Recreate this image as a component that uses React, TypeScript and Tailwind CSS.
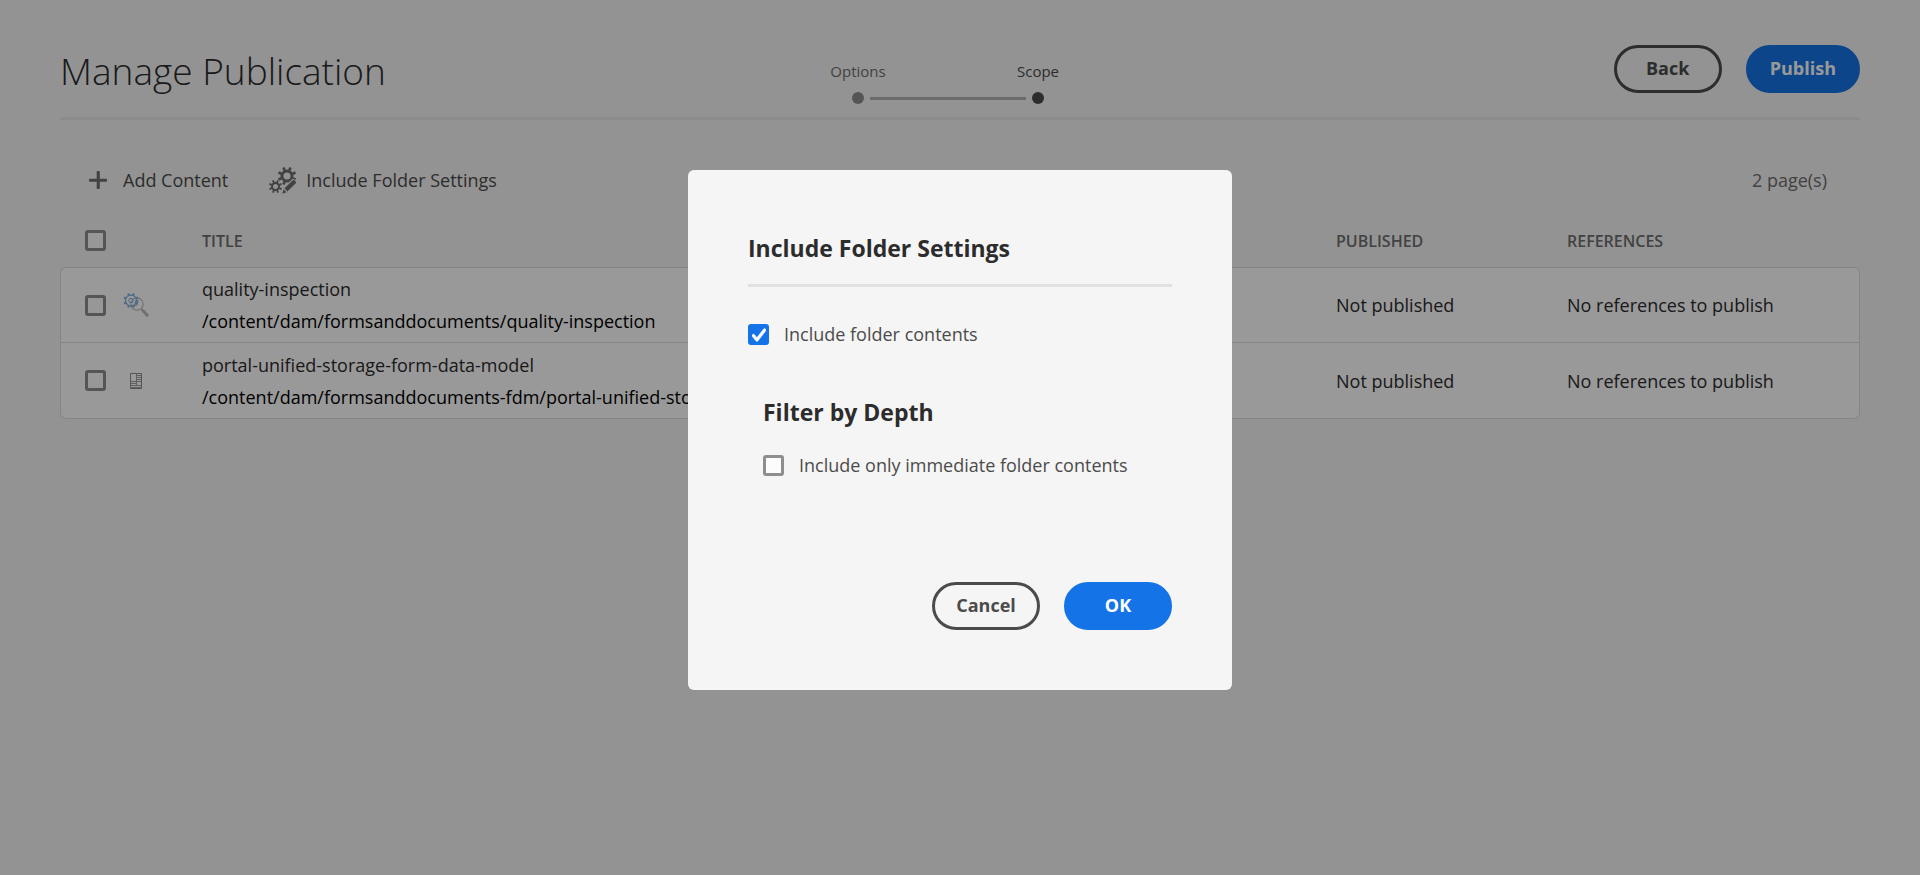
import type { ReactNode } from "react";

function Checkbox({ id, label, checked = false }: { id: string; label?: string; checked?: boolean }) {
  return (
    <span className="relative block size-[21px] shrink-0">
      <input
        id={id}
        type="checkbox"
        aria-label={label}
        defaultChecked={checked}
        className="peer block size-[21px] appearance-none rounded-[3px] border-3 border-[#8e8e8e] bg-[#fcfcfc] checked:border-[#1473e6] checked:bg-[#1473e6]"
      />
      <svg
        viewBox="0 0 10 10"
        aria-hidden="true"
        className="pointer-events-none absolute inset-0 m-auto hidden size-[14px] fill-white stroke-white peer-checked:block"
      >
        <path
          strokeWidth="0.4"
          d="M3.5 9.5a1 1 0 0 1-.774-.368l-2.45-3a1 1 0 1 1 1.548-1.264l1.657 2.028 4.68-6.01A1 1 0 0 1 9.74 2.114l-5.45 7a1 1 0 0 1-.777.386z"
        />
      </svg>
    </span>
  );
}

function Button({ children, primary = false }: { children: ReactNode; primary?: boolean }) {
  const tone = primary
    ? "border-[#1473e6] bg-[#1473e6] text-white"
    : "border-[#4b4b4b] bg-transparent text-[#4b4b4b]";
  return (
    <button
      type="button"
      className={`h-12 min-w-[108px] rounded-full border-3 px-[21px] pb-[2px] text-lg leading-6 font-bold ${tone}`}
    >
      {children}
    </button>
  );
}

function Teeth({ cx, cy, r, width, length }: { cx: number; cy: number; r: number; width: number; length: number }) {
  return (
    <g strokeWidth={width}>
      {[0, 45, 90, 135, 180, 225, 270, 315].map((a) => (
        <path key={a} d={`M${cx} ${cy - r}v${-length}`} transform={`rotate(${a + 22.5} ${cx} ${cy})`} />
      ))}
    </g>
  );
}

function PlusIcon() {
  return (
    <svg viewBox="0 0 20 20" aria-hidden="true" className="size-5 fill-[#6e6e6e]">
      <path d="M9.4 1h1.7a.7.7 0 0 1 .7.7v7h6.5a.7.7 0 0 1 .7.7v1.7a.7.7 0 0 1-.7.7h-6.5v6.5a.7.7 0 0 1-.7.7H9.4a.7.7 0 0 1-.7-.7v-6.5h-7a.7.7 0 0 1-.7-.7V9.4a.7.7 0 0 1 .7-.7h7v-7a.7.7 0 0 1 .7-.7z" />
    </svg>
  );
}

function GearsEditIcon() {
  return (
    <svg viewBox="0 0 28 28" aria-hidden="true" className="size-7 fill-none stroke-[#6e6e6e]">
      <circle cx="19" cy="10" r="5" strokeWidth="2.9" />
      <Teeth cx={19} cy={10} r={6} width={2.6} length={3.2} />
      <circle cx="7.5" cy="20.5" r="3.5" strokeWidth="2" />
      <Teeth cx={7.5} cy={20.5} r={4} width={1.9} length={2.6} />
      <path d="M13.5 28l1.2-6L25 12.5l4.5 3.5z" className="fill-[#f5f5f5]" stroke="none" />
      <path
        d="M14.3 27.7l1.3-4.4 2.9 3zM16.500 22.300l8.500-8.200a.7.7 0 0 1 1 0l2 2a.7.7 0 0 1 0 1l-8.600 8.300z"
        className="fill-[#6e6e6e]"
        stroke="none"
      />
    </svg>
  );
}

function InspectionIcon() {
  return (
    <svg viewBox="0 0 26 26" aria-hidden="true" className="size-[26px] fill-none">
      <circle cx="14" cy="12" r="6.2" stroke="#c0c0c0" strokeWidth="1.2" />
      <path d="M18.5 17l1.3 1.4" stroke="#b4b4b4" strokeWidth="1.6" />
      <path d="M19.8 18.5l4.4 4.6" stroke="#bcbcbc" strokeWidth="3" strokeLinecap="round" />
      <g stroke="#7aaede">
        <circle cx="8" cy="8.5" r="5.4" strokeWidth="1.1" />
        <Teeth cx={8} cy={8.5} r={5.6} width={2.2} length={1.9} />
        <circle cx="8" cy="8.5" r="2.2" strokeWidth="1" />
        <path d="M12 11.5l1.5-3 2.5.5M11.5 13.5l3-1" strokeWidth="1.2" />
      </g>
    </svg>
  );
}

function DataModelIcon() {
  return (
    <svg viewBox="0 0 26 26" aria-hidden="true" className="size-[26px] fill-none stroke-[#a0a0a0]">
      <path d="M7.5 5.5h11v15h-11z" className="stroke-[#8e8e8e]" />
      <path d="M13.5 5.5v12M7.5 13.5h11M14 7.5h4M14 9.5h4M14 11.5h4M7.5 15.5h6M7.5 17.5h11M7.5 19.5h11" />
    </svg>
  );
}

const rows = [
  {
    id: "quality-inspection",
    icon: <InspectionIcon />,
    path: "/content/dam/formsanddocuments/quality-inspection",
  },
  {
    id: "portal-unified-storage-form-data-model",
    icon: <DataModelIcon />,
    path: "/content/dam/formsanddocuments-fdm/portal-unified-storage-form-data-model",
  },
];

const cell = "h-[76px] border-b border-[#dedede] bg-white p-0 group-first:border-t";
const firstCell = "border-l pl-6 group-first:rounded-tl-md group-last:rounded-bl-md";
const lastCell = "border-r group-first:rounded-tr-md group-last:rounded-br-md";

export default function App() {
  return (
    <div className="min-h-screen bg-[#f5f5f5] px-[60px] font-['Open_Sans','Noto_Sans',sans-serif] text-lg leading-6 text-[#2c2c2c]">
      <header className="flex items-start border-b-3 border-[#eaeaea] pt-[45px] pb-[13px]">
        <h1 className="flex-1 text-[37px] leading-[52px] font-light">Manage Publication</h1>
        <div className="flex flex-col items-center pt-4 pr-6">
          <ol className="flex text-center text-[15px] leading-5">
            <li className="w-[180px] text-[#6e6e6e]">Options</li>
            <li className="w-[180px] text-[#4b4b4b]" aria-current="step">Scope</li>
          </ol>
          <div className="mt-[11px] flex items-center gap-[6px]" aria-hidden="true">
            <span className="size-3 rounded-full bg-[#8e8e8e]" />
            <span className="h-[3px] w-[156px] bg-[#b3b3b3]" />
            <span className="size-3 rounded-full bg-[#4b4b4b]" />
          </div>
        </div>
        <div className="flex flex-1 justify-end gap-6">
          <Button>Back</Button>
          <Button primary>Publish</Button>
        </div>
      </header>

      <main>
        <div className="mt-[26px] flex h-[68px] items-center pr-[33px] pl-7 text-[#4b4b4b]">
          <button type="button" className="flex items-center gap-[15px]">
            <PlusIcon />
            Add Content
          </button>
          <button type="button" className="ml-10 flex items-center gap-[10px]">
            <GearsEditIcon />
            Include Folder Settings
          </button>
          <span className="ml-auto text-[#6e6e6e]">2 page(s)</span>
        </div>

        <table className="w-full table-fixed border-separate border-spacing-0 text-left">
          <colgroup>
            <col className="w-[63px]" />
            <col className="w-[79px]" />
            <col />
            <col className="w-[231px]" />
            <col className="w-[293px]" />
          </colgroup>
          <thead className="text-base text-[#6e6e6e]">
            <tr>
              <th className="h-[53px] p-0 pl-[25px]">
                <Checkbox id="select-all" label="Select all" />
              </th>
              <td />
              <th className="p-0 font-semibold">TITLE</th>
              <th className="p-0 font-semibold">PUBLISHED</th>
              <th className="p-0 font-semibold">REFERENCES</th>
            </tr>
          </thead>
          <tbody>
            {rows.map((row) => (
              <tr key={row.id} className="group">
                <td className={`${cell} ${firstCell}`}>
                  <Checkbox id={row.id} label={row.id} />
                </td>
                <td className={cell}>{row.icon}</td>
                <td className={`${cell} leading-8 whitespace-nowrap`}>
                  <div>{row.id}</div>
                  <div className="text-black">{row.path}</div>
                </td>
                <td className={cell}>Not published</td>
                <td className={`${cell} ${lastCell}`}>No references to publish</td>
              </tr>
            ))}
          </tbody>
        </table>
      </main>

      <div className="fixed inset-0 flex items-center justify-center bg-black/40 pb-[15px]">
        <section
          role="dialog"
          aria-modal="true"
          aria-labelledby="dialog-title"
          className="w-[544px] rounded-md bg-[#f5f5f5] p-[60px]"
        >
          <h2 id="dialog-title" className="border-b-3 border-[#e1e1e1] pb-[18px] text-[23px] leading-9 font-bold">
            Include Folder Settings
          </h2>
          <label htmlFor="folder-contents" className="mt-[35px] flex items-center gap-[15px] leading-[25px] text-[#4b4b4b]">
            <Checkbox id="folder-contents" checked />
            Include folder contents
          </label>
          <div className="mt-[47px] pl-[15px]">
            <h3 className="text-[23px] leading-9 font-bold">Filter by Depth</h3>
            <label htmlFor="immediate-contents" className="mt-[23px] flex items-center gap-[15px] leading-[25px] text-[#4b4b4b]">
              <Checkbox id="immediate-contents" />
              Include only immediate folder contents
            </label>
          </div>
          <div className="mt-[104px] flex justify-end gap-6">
            <Button>Cancel</Button>
            <Button primary>OK</Button>
          </div>
        </section>
      </div>
    </div>
  );
}
